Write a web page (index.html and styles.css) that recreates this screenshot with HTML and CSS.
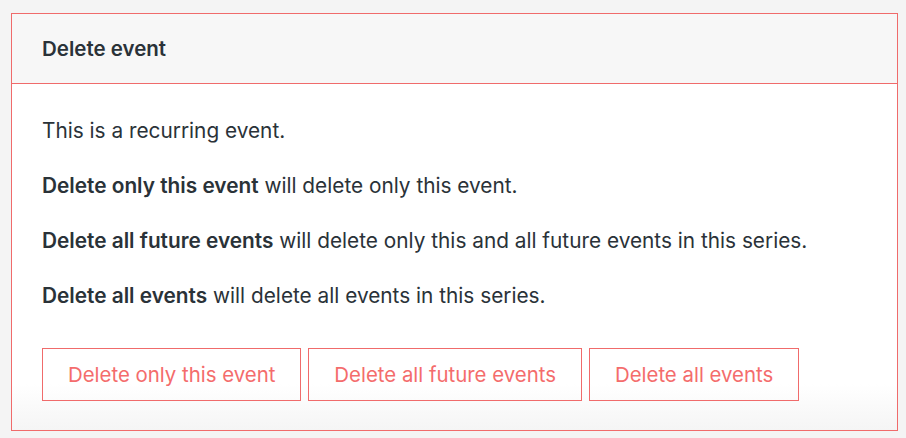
FILE: index.html
```html
<!DOCTYPE html>
<html>
<head>
<meta charset="utf-8">
<link rel="stylesheet" href="styles.css">
</head>
<body>
<div class="modal">
  <div class="modal-header">Delete event</div>
  <div class="modal-body">
    <p>This is a recurring event.</p>
    <p><strong>Delete only this event</strong> will delete only this event.</p>
    <p><strong>Delete all future events</strong> will delete only this and all future events in this series.</p>
    <p><strong>Delete all events</strong> will delete all events in this series.</p>
    <div class="actions">
      <button class="btn">Delete only this event</button>
      <button class="btn">Delete all future events</button>
      <button class="btn">Delete all events</button>
    </div>
  </div>
</div>
</body>
</html>
```
FILE: styles.css
```css
html, body {
  margin: 0;
  padding: 0;
}
body {
  background: #f4f4f4;
  font-family: Inter, "Noto Sans", sans-serif;
  color: #2a3238;
  padding: 13px 8px 7px 11px;
  height: 438px;
  box-sizing: border-box;
}
.modal {
  border: 1px solid #f06b6b;
  background: #fff;
  height: 418px;
  box-sizing: border-box;
  display: flex;
  flex-direction: column;
}
.modal-header {
  background: #f7f7f7;
  border-bottom: 1px solid #f06b6b;
  height: 70px;
  box-sizing: border-box;
  padding: 0 30px;
  display: flex;
  align-items: center;
  font-size: 20.5px;
  font-weight: 600;
}
.modal-body {
  flex: 1;
  padding: 34px 30px 0;
  background: linear-gradient(to bottom, #fff 0, #fff 300px, #f5f5f5 100%);
}
.modal-body p {
  margin: 0 0 29px;
  font-size: 20.8px;
  line-height: 26px;
}
.modal-body strong {
  font-weight: 600;
}
.actions {
  display: flex;
  gap: 7px;
  margin-top: 39px;
}
.btn {
  font-family: Inter, "Noto Sans", sans-serif;
  font-size: 20.4px;
  color: #f46c6c;
  background: transparent;
  border: 1px solid #f06b6b;
  height: 53px;
  padding: 0 25px;
  border-radius: 0;
}
```
